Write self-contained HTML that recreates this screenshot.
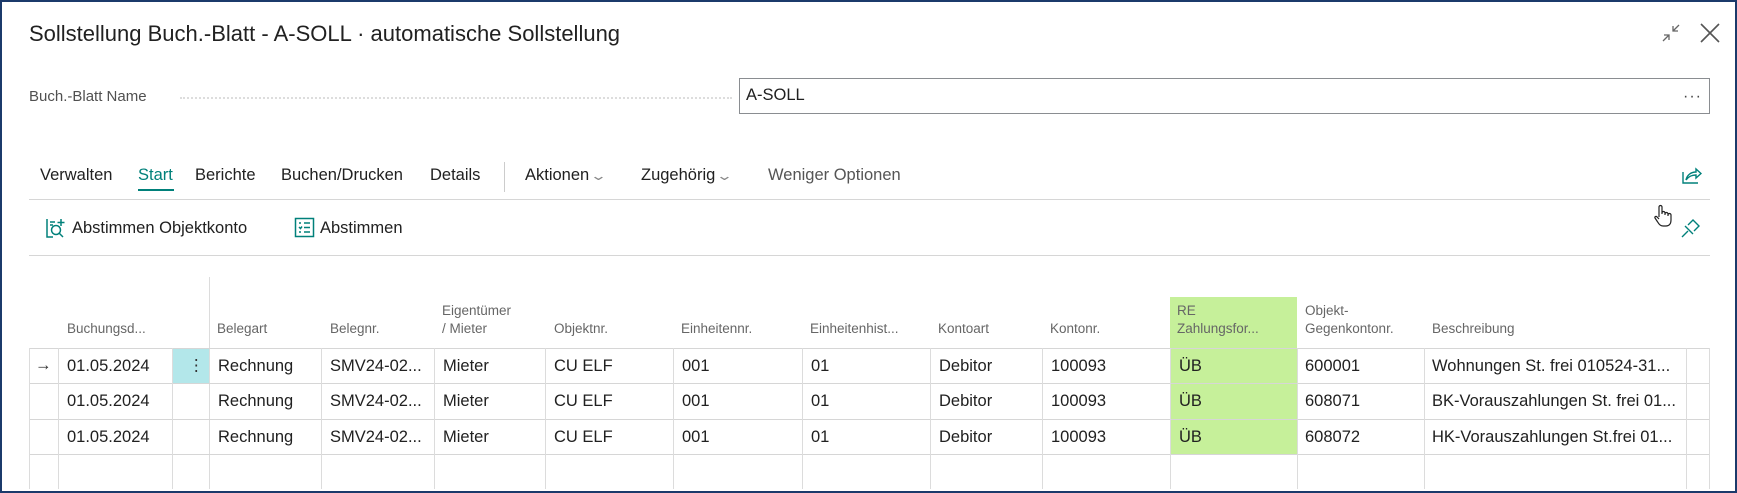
<!DOCTYPE html>
<html><head><meta charset="utf-8"><style>
*{margin:0;padding:0;box-sizing:border-box}
body{width:1737px;height:493px;overflow:hidden;background:#fff;font-family:"Liberation Sans",sans-serif;color:#212121;position:relative}
.frame{position:absolute;left:0;top:0;width:1737px;height:493px;border:2px solid #1b3a6b}
.a{position:absolute;white-space:nowrap}
.title{left:29px;top:21px;font-size:22px;color:#212121}
.lbl{left:29px;top:88px;font-size:15px;color:#505050}
.dots{left:180px;top:97px;width:552px;border-top:2px dotted #ddd}
.inp{left:739px;top:78px;width:971px;height:36px;border:1px solid #8a8d91}
.tab{top:166px;font-size:16.5px;color:#212121}
.hl{position:absolute;height:1px;background:#d6d6d6}
.vl{position:absolute;width:1px;background:#dcdcdc}
.hd{position:absolute;font-size:13.5px;color:#666;line-height:18px}
.c{position:absolute;font-size:16.5px;color:#212121}
.chev{color:#888;font-size:13px;display:inline-block;transform:scaleX(1.6);margin-left:4px}
</style></head><body>
<div class="frame"></div>
<div class="a title">Sollstellung Buch.-Blatt - A-SOLL · automatische Sollstellung</div>
<svg class="a" style="left:1660px;top:22px" width="22" height="22" viewBox="0 0 22 22" fill="none" stroke="#666" stroke-width="1.3"><path d="M3 19L9 13M4 13h5v5M19 3l-6 6M13 4v5h5"/></svg>
<svg class="a" style="left:1699px;top:22px" width="22" height="22" viewBox="0 0 22 22" stroke="#555" stroke-width="1.6"><path d="M2 2L20 20M20 2L2 20"/></svg>
<div class="a lbl">Buch.-Blatt Name</div>
<div class="a dots"></div>
<div class="a inp"></div>
<div class="a" style="left:746px;top:86px;font-size:16.5px">A-SOLL</div>
<div class="a" style="left:1683px;top:88px;font-size:16px;color:#444;letter-spacing:1px">···</div>

<div class="a tab" style="left:40px">Verwalten</div>
<div class="a tab" style="left:138px;color:#00807a">Start</div>
<div class="a" style="left:138px;top:189px;width:36px;height:2px;background:#00807a"></div>
<div class="a tab" style="left:195px">Berichte</div>
<div class="a tab" style="left:281px">Buchen/Drucken</div>
<div class="a tab" style="left:430px">Details</div>
<div class="a" style="left:504px;top:162px;width:1px;height:30px;background:#ccc"></div>
<div class="a tab" style="left:525px">Aktionen<span class="chev">&#8964;</span></div>
<div class="a tab" style="left:641px">Zugehörig<span class="chev">&#8964;</span></div>
<div class="a tab" style="left:768px;color:#555">Weniger Optionen</div>
<svg class="a" style="left:1680px;top:164px" width="22" height="22" viewBox="0 0 22 22" fill="none" stroke="#00807a" stroke-width="1.4"><path d="M3 8v11h15M6 16c1-5 5-8 10-8V5l5 4.5-5 4.5v-3c-4 0-7 1-10 5z"/></svg>
<div class="hl" style="left:29px;top:199px;width:1681px"></div>

<svg class="a" style="left:45px;top:217px" width="22" height="22" viewBox="0 0 22 22" fill="none" stroke="#00807a" stroke-width="1.5"><path d="M2 2v18h6M5 5h5M5 8h3"/><circle cx="11" cy="13" r="4.5"/><path d="M14 16l4 4M16 2v7M12.5 5.5h7"/></svg>
<div class="a" style="left:72px;top:219px;font-size:16.5px">Abstimmen Objektkonto</div>
<svg class="a" style="left:294px;top:217px" width="21" height="21" viewBox="0 0 21 21" fill="none" stroke="#00807a" stroke-width="1.5"><rect x="1.5" y="1.5" width="18" height="18"/><path d="M10 6h6M10 10.5h6M10 15h6M5 6h2M5 10l1.5 1.5L8 9.5M5 15h2"/></svg>
<div class="a" style="left:320px;top:219px;font-size:16.5px">Abstimmen</div>
<svg class="a" style="left:1653px;top:204px" width="20" height="24" viewBox="0 0 20 24" fill="#fff" stroke="#222" stroke-width="1.2"><path d="M6 13V3a1.5 1.5 0 013 0v7M9 9a1.5 1.5 0 013 0v2M12 10a1.5 1.5 0 013 0v2M15 11a1.5 1.5 0 013 0v5c0 4-2 6-5 6h-3c-3 0-4-2-6-5l-2-3c-.6-1 .8-2.2 1.8-1.3L6 15"/></svg>
<svg class="a" style="left:1680px;top:217px" width="22" height="22" viewBox="0 0 22 22" fill="none" stroke="#00807a" stroke-width="1.4"><path d="M2 20l6-6M6 10l6 6M8 8l5-5 6 6-5 5M5 9l8 8"/></svg>
<div class="hl" style="left:29px;top:255px;width:1681px"></div>

<!-- table -->
<div class="a" style="left:1170px;top:297px;width:127px;height:157px;background:#c6f09a"></div>
<div class="a" style="left:172px;top:348px;width:37px;height:35px;background:#b3e7ea"></div>
<div class="vl" style="left:209px;top:277px;height:212px"></div>
<div class="hl" style="left:29px;top:348px;width:1681px"></div>
<div class="hl" style="left:29px;top:383px;width:1681px"></div>
<div class="hl" style="left:29px;top:419px;width:1681px"></div>
<div class="hl" style="left:29px;top:454px;width:1681px"></div>
<div class="vl" style="left:29px;top:348px;height:141px"></div>
<div class="vl" style="left:58px;top:348px;height:141px"></div>
<div class="vl" style="left:172px;top:348px;height:141px"></div>
<div class="vl" style="left:321px;top:348px;height:141px"></div>
<div class="vl" style="left:434px;top:348px;height:141px"></div>
<div class="vl" style="left:545px;top:348px;height:141px"></div>
<div class="vl" style="left:673px;top:348px;height:141px"></div>
<div class="vl" style="left:802px;top:348px;height:141px"></div>
<div class="vl" style="left:930px;top:348px;height:141px"></div>
<div class="vl" style="left:1042px;top:348px;height:141px"></div>
<div class="vl" style="left:1170px;top:348px;height:141px"></div>
<div class="vl" style="left:1297px;top:348px;height:141px"></div>
<div class="vl" style="left:1424px;top:348px;height:141px"></div>
<div class="vl" style="left:1686px;top:348px;height:141px"></div>
<div class="vl" style="left:1709px;top:348px;height:141px"></div>

<div class="hd" style="left:67px;top:320px">Buchungsd...</div>
<div class="hd" style="left:217px;top:320px">Belegart</div>
<div class="hd" style="left:330px;top:320px">Belegnr.</div>
<div class="hd" style="left:442px;top:302px">Eigentümer<br>/ Mieter</div>
<div class="hd" style="left:554px;top:320px">Objektnr.</div>
<div class="hd" style="left:681px;top:320px">Einheitennr.</div>
<div class="hd" style="left:810px;top:320px">Einheitenhist...</div>
<div class="hd" style="left:938px;top:320px">Kontoart</div>
<div class="hd" style="left:1050px;top:320px">Kontonr.</div>
<div class="hd" style="left:1177px;top:302px">RE<br>Zahlungsfor...</div>
<div class="hd" style="left:1305px;top:302px">Objekt-<br>Gegenkontonr.</div>
<div class="hd" style="left:1432px;top:320px">Beschreibung</div>

<div class="c" style="left:35px;top:356px;color:#333">→</div>
<div class="c" style="left:188px;top:356px;color:#333">⋮</div>

<div class="c" style="left:67px;top:357px">01.05.2024</div>
<div class="c" style="left:67px;top:392px">01.05.2024</div>
<div class="c" style="left:67px;top:428px">01.05.2024</div>
<div class="c" style="left:218px;top:357px">Rechnung</div><div class="c" style="left:218px;top:392px">Rechnung</div><div class="c" style="left:218px;top:428px">Rechnung</div>
<div class="c" style="left:330px;top:357px">SMV24-02...</div><div class="c" style="left:330px;top:392px">SMV24-02...</div><div class="c" style="left:330px;top:428px">SMV24-02...</div>
<div class="c" style="left:443px;top:357px">Mieter</div><div class="c" style="left:443px;top:392px">Mieter</div><div class="c" style="left:443px;top:428px">Mieter</div>
<div class="c" style="left:554px;top:357px">CU ELF</div><div class="c" style="left:554px;top:392px">CU ELF</div><div class="c" style="left:554px;top:428px">CU ELF</div>
<div class="c" style="left:682px;top:357px">001</div><div class="c" style="left:682px;top:392px">001</div><div class="c" style="left:682px;top:428px">001</div>
<div class="c" style="left:811px;top:357px">01</div><div class="c" style="left:811px;top:392px">01</div><div class="c" style="left:811px;top:428px">01</div>
<div class="c" style="left:939px;top:357px">Debitor</div><div class="c" style="left:939px;top:392px">Debitor</div><div class="c" style="left:939px;top:428px">Debitor</div>
<div class="c" style="left:1051px;top:357px">100093</div><div class="c" style="left:1051px;top:392px">100093</div><div class="c" style="left:1051px;top:428px">100093</div>
<div class="c" style="left:1179px;top:357px">ÜB</div><div class="c" style="left:1179px;top:392px">ÜB</div><div class="c" style="left:1179px;top:428px">ÜB</div>
<div class="c" style="left:1305px;top:357px">600001</div><div class="c" style="left:1305px;top:392px">608071</div><div class="c" style="left:1305px;top:428px">608072</div>
<div class="c" style="left:1432px;top:357px">Wohnungen St. frei 010524-31...</div>
<div class="c" style="left:1432px;top:392px">BK-Vorauszahlungen St. frei 01...</div>
<div class="c" style="left:1432px;top:428px">HK-Vorauszahlungen St.frei 01...</div>
</body></html>
